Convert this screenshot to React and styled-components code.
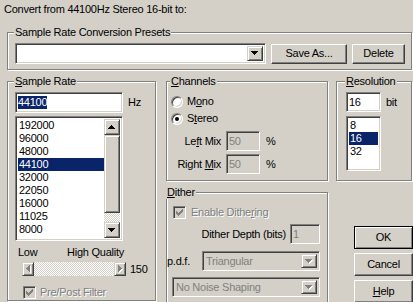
import React from "react";
import styled, { createGlobalStyle, css } from "styled-components";

const FACE = "#d4d0c8";
const SHADOW = "#808080";
const DARK = "#404040";
const LIGHT = "#ffffff";
const SELECT = "#0a246a";

const rates = ["192000", "96000", "48000", "44100", "32000", "22050", "16000", "11025", "8000", "6000"];
const depths = ["8", "16", "32"];

// little pixel arrows for combo and scroll buttons
const arrowPaths = {
  down: "M0 0h7v1H0z M1 1h5v1H1z M2 2h3v1H2z M3 3h1v1H3z",
  up: "M3 0h1v1H3z M2 1h3v1H2z M1 2h5v1H1z M0 3h7v1H0z",
  left: "M3 0h1v7H3z M2 1h1v5H2z M1 2h1v3H1z M0 3h1v1H0z",
  right: "M0 0h1v7H0z M1 1h1v5H1z M2 2h1v3H2z M3 3h1v1H3z",
};

const Arrow = ({ dir, off }) => {
  const flat = dir === "down" || dir === "up";
  const w = flat ? 7 : 4;
  const h = flat ? 4 : 7;
  return (
    <ArrowSvg width={w + 1} height={h + 1} viewBox={`0 0 ${w + 1} ${h + 1}`}>
      {off && <path d={arrowPaths[dir]} fill={LIGHT} transform="translate(1 1)" />}
      <path d={arrowPaths[dir]} fill={off ? SHADOW : "#000"} />
    </ArrowSvg>
  );
};

const Check = () => (
  <svg width="7" height="7" viewBox="0 0 7 7" shapeRendering="crispEdges">
    <path
      fill={SHADOW}
      d="M6 0h1v1H6z M5 1h2v1H5z M0 2h1v1H0z M4 2h3v1H4z M0 3h2v1H0z M3 3h3v1H3z M0 4h5v1H0z M1 5h3v1H1z M2 6h1v1H2z"
    />
  </svg>
);

const App = () => {
  return (
    <>
      <GlobalStyle />
      <Dialog>
        <Caption>Convert from 44100Hz Stereo 16-bit to:</Caption>

        <Group $w={405} $h={44} $ml={7} $pad="4px 7px 5px">
          <Legend>Sample Rate Conversion Presets</Legend>
          <Row>
            <Combo $w={251} $h={21}>
              <ComboText />
              <DropButton>
                <Arrow dir="down" />
              </DropButton>
            </Combo>
            <Button $w={76} $ml={5}>Save As...</Button>
            <Button $w={53} $ml={5}>Delete</Button>
          </Row>
        </Group>

        <Columns>
          <Group $w={149} $h={226} $ml={7} $pad="4px 7px 0">
            <Legend>
              <U>S</U>ample Rate
            </Legend>
            <Row>
              <Field $w={108} $h={21}>
                <Selected>44100</Selected>
              </Field>
              <Text $ml={5}>Hz</Text>
            </Row>
            <ListBox $w={108} $h={125} $mt={3}>
              <Items>
                {rates.map((r) => (
                  <Item key={r} $sel={r === "44100"}>
                    {r}
                  </Item>
                ))}
              </Items>
              <VScroll>
                <ScrollButton $v>
                  <Arrow dir="up" />
                </ScrollButton>
                <Thumb />
                <Track />
                <ScrollButton $v>
                  <Arrow dir="down" />
                </ScrollButton>
              </VScroll>
            </ListBox>
            <QualityLabels>
              <span>Low</span>
              <span>High Quality</span>
            </QualityLabels>
            <Row $mt={3}>
              <HScroll>
                <ScrollButton>
                  <Arrow dir="left" off />
                </ScrollButton>
                <Track />
                <ScrollButton>
                  <Arrow dir="right" off />
                </ScrollButton>
              </HScroll>
              <Text $ml={4}>150</Text>
            </Row>
            <Row $mt={10} $ml={8}>
              <CheckBox $off>
                <Check />
              </CheckBox>
              <Text $ml={4} $off>
                Pre/Post Filter
              </Text>
            </Row>
          </Group>

          <Column $w={162} $ml={10}>
            <Group $w={162} $h={106} $pad="7px 0 0 4px">
              <Legend>
                <U>C</U>hannels
              </Legend>
              <Row>
                <Radio />
                <Text $ml={4}>
                  M<U>o</U>no
                </Text>
              </Row>
              <Row $mt={4}>
                <Radio $on />
                <Text $ml={4}>
                  S<U>t</U>ereo
                </Text>
              </Row>
              <Row $mt={6}>
                <MixLabel>
                  Le<U>f</U>t Mix
                </MixLabel>
                <Field $w={34} $h={20} $off>
                  50
                </Field>
                <Text $ml={6}>%</Text>
              </Row>
              <Row $mt={3}>
                <MixLabel>
                  Right <U>M</U>ix
                </MixLabel>
                <Field $w={34} $h={20} $off>
                  50
                </Field>
                <Text $ml={6}>%</Text>
              </Row>
            </Group>

            <Group $w={162} $h={122} $mt={5} $pad="7px 7px 0 0">
              <Legend>
                <U>D</U>ither
              </Legend>
              <Row $ml={6}>
                <CheckBox $off>
                  <Check />
                </CheckBox>
                <Text $ml={5} $off>
                  Enable Dithe<U>r</U>ing
                </Text>
              </Row>
              <Row $mt={5} $end>
                <Text>Dither Depth (bits)</Text>
                <Field $w={30} $h={20} $ml={4} $off>
                  1
                </Field>
              </Row>
              <Row $mt={7}>
                <PdfLabel>p.d.f.</PdfLabel>
                <Combo $w={118} $h={20} $off>
                  <ComboText>Triangular</ComboText>
                  <DropButton>
                    <Arrow dir="down" off />
                  </DropButton>
                </Combo>
              </Row>
              <Row $mt={6} $ml={5}>
                <Combo $w={148} $h={20} $off>
                  <ComboText>No Noise Shaping</ComboText>
                  <DropButton>
                    <Arrow dir="down" off />
                  </DropButton>
                </Combo>
              </Row>
            </Group>
          </Column>

          <Column $w={76} $ml={8}>
            <Group $w={76} $h={106} $pad="4px 0 0 9px">
              <Legend>
                <U>R</U>esolution
              </Legend>
              <Row>
                <Field $w={35} $h={20}>
                  16
                </Field>
                <Text $ml={5}>bit</Text>
              </Row>
              <ListBox $w={35} $h={55} $mt={4}>
                <Items>
                  {depths.map((d) => (
                    <Item key={d} $sel={d === "16"}>
                      {d}
                    </Item>
                  ))}
                </Items>
              </ListBox>
            </Group>
            <Buttons>
              <Button $w={59} $h={23} $default>
                OK
              </Button>
              <Button $w={59} $h={23}>
                Cancel
              </Button>
              <Button $w={59} $h={23}>
                <U>H</U>elp
              </Button>
            </Buttons>
          </Column>
        </Columns>
      </Dialog>
    </>
  );
};

const GlobalStyle = createGlobalStyle`
  html, body {
    margin: 0;
    padding: 0;
    background: ${FACE};
    overflow: hidden;
  }
  body {
    font-family: "Liberation Sans", Arial, sans-serif;
    font-size: 11px;
    letter-spacing: -0.25px;
    line-height: 13px;
    color: #000;
  }
`;

const raised = css`
  background: ${FACE};
  border: 1px solid;
  border-color: ${FACE} ${DARK} ${DARK} ${FACE};
  box-shadow: inset 1px 1px ${LIGHT}, inset -1px -1px ${SHADOW};
`;

const sunken = css`
  border: 1px solid;
  border-color: ${SHADOW} ${LIGHT} ${LIGHT} ${SHADOW};
  box-shadow: inset 1px 1px ${DARK}, inset -1px -1px ${FACE};
`;

const checker = css`
  background-color: ${FACE};
  background-image: repeating-conic-gradient(${LIGHT} 0 25%, ${FACE} 0 50%);
  background-size: 2px 2px;
`;

const Dialog = styled.div`
  width: 413px;
  height: 302px;
  overflow: hidden;
  display: flex;
  flex-direction: column;
`;

const Caption = styled.div`
  flex: none;
  height: 26px;
  box-sizing: border-box;
  padding: 3px 0 0 4px;
`;

const Group = styled.fieldset`
  flex: none;
  box-sizing: border-box;
  min-width: 0;
  width: ${(p) => p.$w}px;
  height: ${(p) => p.$h}px;
  margin: ${(p) => p.$mt || 0}px 0 0 ${(p) => p.$ml || 0}px;
  padding: ${(p) => p.$pad || 0};
  border: 1px solid ${SHADOW};
  box-shadow: inset 1px 1px ${LIGHT}, 1px 1px ${LIGHT};
`;

const Legend = styled.legend`
  padding: 0 1px;
  margin-left: -1px;
  line-height: 13px;
  background: ${FACE};
`;

const U = styled.span`
  text-decoration: underline;
`;

const Columns = styled.div`
  display: flex;
  align-items: flex-start;
  margin-top: 5px;
`;

const Column = styled.div`
  flex: none;
  display: flex;
  flex-direction: column;
  width: ${(p) => p.$w}px;
  margin-left: ${(p) => p.$ml || 0}px;
`;

const Row = styled.div`
  display: flex;
  align-items: center;
  justify-content: ${(p) => (p.$end ? "flex-end" : "flex-start")};
  margin-top: ${(p) => p.$mt || 0}px;
  margin-left: ${(p) => p.$ml || 0}px;
`;

const Text = styled.span`
  white-space: nowrap;
  margin-left: ${(p) => p.$ml || 0}px;
  color: ${(p) => (p.$off ? SHADOW : "#000")};
  text-shadow: ${(p) => (p.$off ? `1px 1px ${LIGHT}` : "none")};
`;

const MixLabel = styled.span`
  width: 50px;
  margin-right: 5px;
  text-align: right;
  white-space: nowrap;
`;

const PdfLabel = styled.span`
  width: 35px;
  white-space: nowrap;
`;

const Field = styled.div`
  flex: none;
  box-sizing: border-box;
  width: ${(p) => p.$w}px;
  height: ${(p) => p.$h}px;
  margin-left: ${(p) => p.$ml || 0}px;
  padding: 0 2px;
  display: flex;
  align-items: center;
  ${sunken};
  background: ${(p) => (p.$off ? FACE : LIGHT)};
  color: ${(p) => (p.$off ? SHADOW : "#000")};
`;

const Selected = styled.span`
  background: ${SELECT};
  color: ${LIGHT};
`;

const Combo = styled.div`
  flex: none;
  box-sizing: border-box;
  width: ${(p) => p.$w}px;
  height: ${(p) => p.$h}px;
  display: flex;
  padding: 2px;
  ${sunken};
  background: ${(p) => (p.$off ? FACE : LIGHT)};
  color: ${(p) => (p.$off ? SHADOW : "#000")};
`;

const ComboText = styled.div`
  flex: 1;
  padding-left: 1px;
  display: flex;
  align-items: center;
  white-space: nowrap;
  overflow: hidden;
`;

const DropButton = styled.div`
  flex: none;
  box-sizing: border-box;
  width: 16px;
  display: flex;
  align-items: center;
  justify-content: center;
  ${raised};
`;

const ArrowSvg = styled.svg`
  display: block;
  shape-rendering: crispEdges;
`;

const Button = styled.button`
  flex: none;
  box-sizing: border-box;
  width: ${(p) => p.$w}px;
  height: ${(p) => p.$h || 20}px;
  margin: 0 0 0 ${(p) => p.$ml || 0}px;
  padding: 0;
  font: inherit;
  letter-spacing: inherit;
  color: #000;
  background: ${FACE};
  border: 1px solid;
  border-color: ${LIGHT} ${DARK} ${DARK} ${LIGHT};
  box-shadow: inset -1px -1px ${SHADOW};
  ${(p) =>
    p.$default &&
    css`
      border-color: #000;
      box-shadow: inset 1px 1px ${LIGHT}, inset -1px -1px ${SHADOW};
    `}
`;

const Buttons = styled.div`
  display: flex;
  flex-direction: column;
  gap: 4px;
  margin: 45px 0 0 18px;
`;

const ListBox = styled.div`
  flex: none;
  box-sizing: border-box;
  width: ${(p) => p.$w}px;
  height: ${(p) => p.$h}px;
  margin-top: ${(p) => p.$mt || 0}px;
  display: flex;
  padding: 2px;
  overflow: hidden;
  background: ${LIGHT};
  ${sunken};
`;

const Items = styled.div`
  flex: 1;
  overflow: hidden;
`;

const Item = styled.div`
  height: 13px;
  padding-left: 1px;
  white-space: nowrap;
  background: ${(p) => (p.$sel ? SELECT : "transparent")};
  color: ${(p) => (p.$sel ? LIGHT : "#000")};
`;

const VScroll = styled.div`
  flex: none;
  width: 16px;
  display: flex;
  flex-direction: column;
`;

const HScroll = styled.div`
  flex: none;
  width: 104px;
  height: 14px;
  margin-left: 7px;
  display: flex;
`;

const ScrollButton = styled.div`
  flex: none;
  box-sizing: border-box;
  width: ${(p) => (p.$v ? 16 : 12)}px;
  height: ${(p) => (p.$v ? "16px" : "100%")};
  display: flex;
  align-items: center;
  justify-content: center;
  ${raised};
`;

const Thumb = styled.div`
  flex: none;
  box-sizing: border-box;
  height: 78px;
  ${raised};
`;

const Track = styled.div`
  flex: 1;
  ${checker};
`;

const QualityLabels = styled.div`
  width: 106px;
  margin: 5px 0 0 3px;
  display: flex;
  justify-content: space-between;
`;

const CheckBox = styled.span`
  flex: none;
  box-sizing: border-box;
  width: 13px;
  height: 13px;
  display: flex;
  align-items: center;
  justify-content: center;
  ${sunken};
  background: ${(p) => (p.$off ? FACE : LIGHT)};
`;

const Radio = styled.span`
  flex: none;
  box-sizing: border-box;
  width: 12px;
  height: 12px;
  border-radius: 50%;
  display: flex;
  align-items: center;
  justify-content: center;
  background: ${LIGHT};
  border: 1px solid;
  border-color: ${SHADOW} ${LIGHT} ${LIGHT} ${SHADOW};
  box-shadow: inset 1px 1px ${DARK}, inset -1px -1px ${FACE};

  &::after {
    content: "";
    display: ${(p) => (p.$on ? "block" : "none")};
    width: 4px;
    height: 4px;
    border-radius: 50%;
    background: #000;
  }
`;

export default App;
